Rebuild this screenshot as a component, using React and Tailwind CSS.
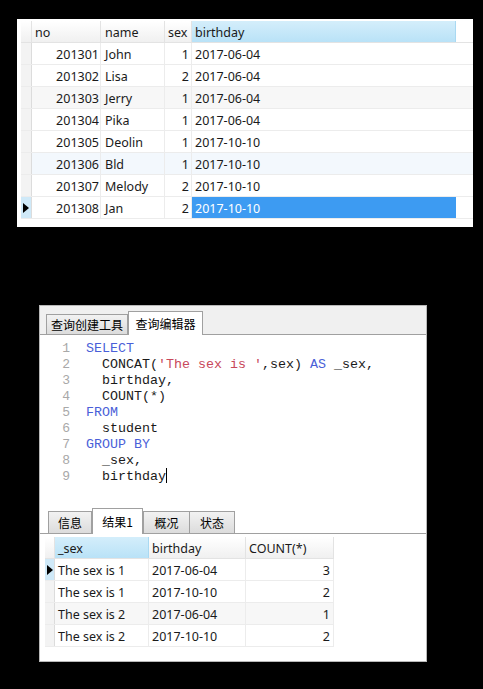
import React from "react";

const F = { fontFamily: '"Noto Sans", "Noto Sans CJK SC", sans-serif' };
const CJK = { fontFamily: '"Noto Sans CJK SC", "Noto Sans", sans-serif' };
const MONO = { fontFamily: '"Liberation Mono", "Courier New", monospace' };

const rows = [
  ["201301", "John", "1", "2017-06-04", "bg-white"],
  ["201302", "Lisa", "2", "2017-06-04", "bg-white"],
  ["201303", "Jerry", "1", "2017-06-04", "bg-[#f7f7f7]"],
  ["201304", "Pika", "1", "2017-06-04", "bg-white"],
  ["201305", "Deolin", "1", "2017-10-10", "bg-white"],
  ["201306", "Bld", "1", "2017-10-10", "bg-[#f3f8fd]"],
  ["201307", "Melody", "2", "2017-10-10", "bg-white"],
  ["201308", "Jan", "2", "2017-10-10", "bg-white"],
];

const res = [
  ["The sex is 1", "2017-06-04", "3"],
  ["The sex is 1", "2017-10-10", "2"],
  ["The sex is 2", "2017-06-04", "1"],
  ["The sex is 2", "2017-10-10", "2"],
];

function Tri() {
  return (
    <svg width="6" height="10" viewBox="0 0 6 10">
      <path d="M0 0 L6 5 L0 10 Z" fill="#000" />
    </svg>
  );
}

const hdr = "h-full flex items-center pt-[4px] border-r border-[#e3e3e3] bg-gradient-to-b from-[#ffffff] to-[#f0f0f0]";
const hdrBlue = "h-full flex items-center pt-[4px] border-r border-[#a9d9f2] bg-gradient-to-b from-[#d4eefb] to-[#b9e2f7]";
const cell = "h-full flex items-center pt-[4px] ";

export default function App() {
  return (
    <div className="w-[483px] h-[689px] bg-black flex flex-col text-[12.5px] text-[#1a1a1a]" style={F}>
      {/* Top panel */}
      <div className="mt-[19px] ml-[17px] w-[456px] h-[208px] bg-white pt-[2px] pl-[4px]">
        <div className="flex h-[22px] border-b border-[#e3e3e3]">
          <div className={hdr + " w-[11px]"} />
          <div className={hdr + " w-[69px] pl-[3px]"}>no</div>
          <div className={hdr + " w-[64px] pl-[4px]"}>name</div>
          <div className={hdr + " w-[27px] pl-[3px]"}>sex</div>
          <div className={hdrBlue + " w-[264px] pl-[3px]"}>birthday</div>
        </div>
        {rows.map((r, i) => {
          const sel = i === 7;
          return (
            <div key={i} className={"flex h-[22px] border-b border-[#ececec] " + r[4]}>
              <div
                className={
                  "w-[11px] h-full flex items-center justify-center border-r border-[#dcdcdc] " +
                  (sel ? "bg-[#cfe9f8]" : "bg-[#f3f3f3]")
                }
              >
                {sel && <Tri />}
              </div>
              <div className={cell + "w-[69px] justify-end pr-[1px] border-r border-[#ececec]"}>{r[0]}</div>
              <div className={cell + "w-[64px] pl-[4px] border-r border-[#ececec]"}>{r[1]}</div>
              <div className={cell + "w-[27px] justify-end pr-[2px] border-r border-[#ececec]"}>{r[2]}</div>
              <div className={cell + "w-[264px] pl-[3px] " + (sel ? "bg-[#3d9bf2] text-white" : "")}>
                {r[3]}
              </div>
            </div>
          );
        })}
      </div>

      {/* Bottom panel */}
      <div className="mt-[78px] ml-[39px] w-[388px] h-[357px] bg-white border border-[#b8b8b8] flex flex-col">
        {/* Top tabs */}
        <div className="h-[29px] bg-[#f0f0f0] flex items-end pl-[6px] border-b border-[#a0a0a0] shrink-0" style={CJK}>
          <div className="w-[82px] h-[21px] -mb-px border border-[#a0a0a0] bg-gradient-to-b from-[#f2f2f2] to-[#dcdcdc] flex items-center justify-center text-[12px] text-black">
            查询创建工具
          </div>
          <div className="w-[75px] h-[24px] -mb-px border border-b-0 border-[#a0a0a0] bg-white flex items-center justify-center text-[12px] text-black">
            查询编辑器
          </div>
        </div>
        {/* Editor */}
        <div className="h-[171px] shrink-0 pt-[6px] text-[13.33px] leading-[16px]" style={MONO}>
          {[
            [<span className="text-[#4a5fd8]">SELECT</span>],
            [<span>{"  CONCAT("}</span>, <span className="text-[#c8485a]">'The sex is '</span>, <span>{",sex) "}</span>, <span className="text-[#4a5fd8]">AS</span>, <span>{" _sex,"}</span>],
            [<span>{"  birthday,"}</span>],
            [<span>{"  COUNT(*)"}</span>],
            [<span className="text-[#4a5fd8]">FROM</span>],
            [<span>{"  student"}</span>],
            [<span className="text-[#4a5fd8]">GROUP BY</span>],
            [<span>{"  _sex,"}</span>],
            [<span>{"  birthday"}</span>, <span className="inline-block w-px h-[15px] bg-black align-middle -mt-[2px]" />],
          ].map((parts, i) => (
            <div key={i} className="flex h-[16px]">
              <div className="w-[30px] text-right text-[#a8a8a8] text-[13px]">{i + 1}</div>
              <div className="ml-[16px] whitespace-pre text-[#1a1a1a]">
                {parts.map((p, j) => <React.Fragment key={j}>{p}</React.Fragment>)}
              </div>
            </div>
          ))}
        </div>
        {/* Result tabs */}
        <div className="h-[28px] shrink-0 flex items-end pl-[8px] border-b border-[#a0a0a0]" style={CJK}>
          <div className="w-[44px] h-[23px] -mb-px border border-[#a0a0a0] bg-gradient-to-b from-[#f2f2f2] to-[#dcdcdc] flex items-center justify-center text-[12px] text-black">信息</div>
          <div className="w-[51px] h-[26px] -mb-px border border-b-0 border-[#a0a0a0] bg-white flex items-center justify-center text-[12px] text-black">结果1</div>
          <div className="w-[47px] h-[23px] -mb-px border border-[#a0a0a0] bg-gradient-to-b from-[#f2f2f2] to-[#dcdcdc] flex items-center justify-center text-[12px] text-black">概况</div>
          <div className="w-[45px] h-[23px] -mb-px border border-l-0 border-[#a0a0a0] bg-gradient-to-b from-[#f2f2f2] to-[#dcdcdc] flex items-center justify-center text-[12px] text-black">状态</div>
        </div>
        {/* Result grid */}
        <div className="mt-[3px] ml-[5px] w-[289px]">
          <div className="flex h-[22px] border-b border-[#e3e3e3]">
            <div className={hdr + " w-[10px]"} />
            <div className={hdrBlue + " w-[94px] pl-[3px]"}>_sex</div>
            <div className={hdr + " w-[97px] pl-[3px]"}>birthday</div>
            <div className={hdr + " w-[88px] pl-[3px]"}>COUNT(*)</div>
          </div>
          {res.map((r, i) => (
            <div key={i} className={"flex h-[22px] border-b border-[#ececec] " + (i === 2 ? "bg-[#f7f7f7]" : "bg-white")}>
              <div className={"w-[10px] h-full flex items-center justify-center border-r border-[#dcdcdc] " + (i === 0 ? "bg-[#cfe9f8]" : "bg-[#f3f3f3]")}>
                {i === 0 && <Tri />}
              </div>
              <div className={cell + "w-[94px] pl-[3px] border-r border-[#ececec]"}>{r[0]}</div>
              <div className={cell + "w-[97px] pl-[3px] border-r border-[#ececec]"}>{r[1]}</div>
              <div className={cell + "w-[88px] justify-end pr-[3px] border-r border-[#ececec]"}>{r[2]}</div>
            </div>
          ))}
        </div>
      </div>
    </div>
  );
}
